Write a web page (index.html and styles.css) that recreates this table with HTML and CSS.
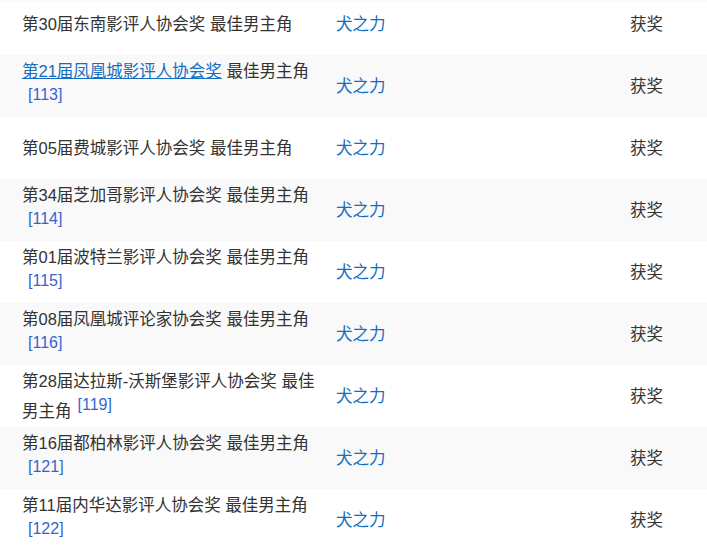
FILE: index.html
```html
<!DOCTYPE html>
<html lang="zh-CN">
<head>
    <meta charset="UTF-8">
    <meta name="viewport" content="width=device-width, initial-scale=1.0">
    <title>获奖记录</title>
    <link rel="stylesheet" href="styles.css">
</head>
<body>
    <table class="award-table">
        <colgroup>
            <col class="col-award">
            <col class="col-work">
            <col class="col-result">
        </colgroup>
        <tbody>
            <tr>
                <td>第30届东南影评人协会奖 最佳男主角</td>
                <td><a href="#" class="work-link">犬之力</a></td>
                <td>获奖</td>
            </tr>
            <tr class="alt">
                <td><a href="#" class="award-link">第21届凤凰城影评人协会奖</a> 最佳男主角<sup class="ref">[113]</sup></td>
                <td><a href="#" class="work-link">犬之力</a></td>
                <td>获奖</td>
            </tr>
            <tr>
                <td>第05届费城影评人协会奖 最佳男主角</td>
                <td><a href="#" class="work-link">犬之力</a></td>
                <td>获奖</td>
            </tr>
            <tr class="alt">
                <td>第34届芝加哥影评人协会奖 最佳男主角<sup class="ref">[114]</sup></td>
                <td><a href="#" class="work-link">犬之力</a></td>
                <td>获奖</td>
            </tr>
            <tr>
                <td>第01届波特兰影评人协会奖 最佳男主角<sup class="ref">[115]</sup></td>
                <td><a href="#" class="work-link">犬之力</a></td>
                <td>获奖</td>
            </tr>
            <tr class="alt">
                <td>第08届凤凰城评论家协会奖 最佳男主角<sup class="ref">[116]</sup></td>
                <td><a href="#" class="work-link">犬之力</a></td>
                <td>获奖</td>
            </tr>
            <tr>
                <td>第28届达拉斯-沃斯堡影评人协会奖 最佳男主角<sup class="ref">[119]</sup></td>
                <td><a href="#" class="work-link">犬之力</a></td>
                <td>获奖</td>
            </tr>
            <tr class="alt">
                <td>第16届都柏林影评人协会奖 最佳男主角<sup class="ref">[121]</sup></td>
                <td><a href="#" class="work-link">犬之力</a></td>
                <td>获奖</td>
            </tr>
            <tr>
                <td>第11届内华达影评人协会奖 最佳男主角<sup class="ref">[122]</sup></td>
                <td><a href="#" class="work-link">犬之力</a></td>
                <td>获奖</td>
            </tr>
        </tbody>
    </table>
</body>
</html>
```

FILE: styles.css
```css
* {
    margin: 0;
    padding: 0;
    box-sizing: border-box;
}

html {
    background: linear-gradient(to bottom, #f9f9f9 2px, #ffffff 2px) no-repeat;
    background-color: #ffffff;
}

body {
    font-family: "Liberation Sans", "Noto Sans CJK SC", sans-serif;
    font-size: 16.5px;
    line-height: 24px;
    color: #333333;
    overflow: hidden;
}

.award-table {
    width: 707px;
    margin-top: -7px;
    border-collapse: collapse;
    table-layout: fixed;
}

.col-award {
    width: 326px;
}

.col-work {
    width: 294px;
}

.col-result {
    width: 87px;
}

.award-table tr {
    height: 62px;
}

.award-table tr.alt {
    background-color: #f9f9f9;
}

.award-table td {
    padding: 0 4px 0 10px;
    vertical-align: middle;
    text-align: left;
}

.award-table td:first-child {
    padding-left: 22px;
}

.work-link {
    color: #136ec2;
    text-decoration: none;
}

.award-link {
    color: #136ec2;
    text-decoration: underline;
}

.ref {
    font-size: 16px;
    color: #3366cc;
    margin-left: 6px;
    vertical-align: super;
    line-height: 24px;
}
```
